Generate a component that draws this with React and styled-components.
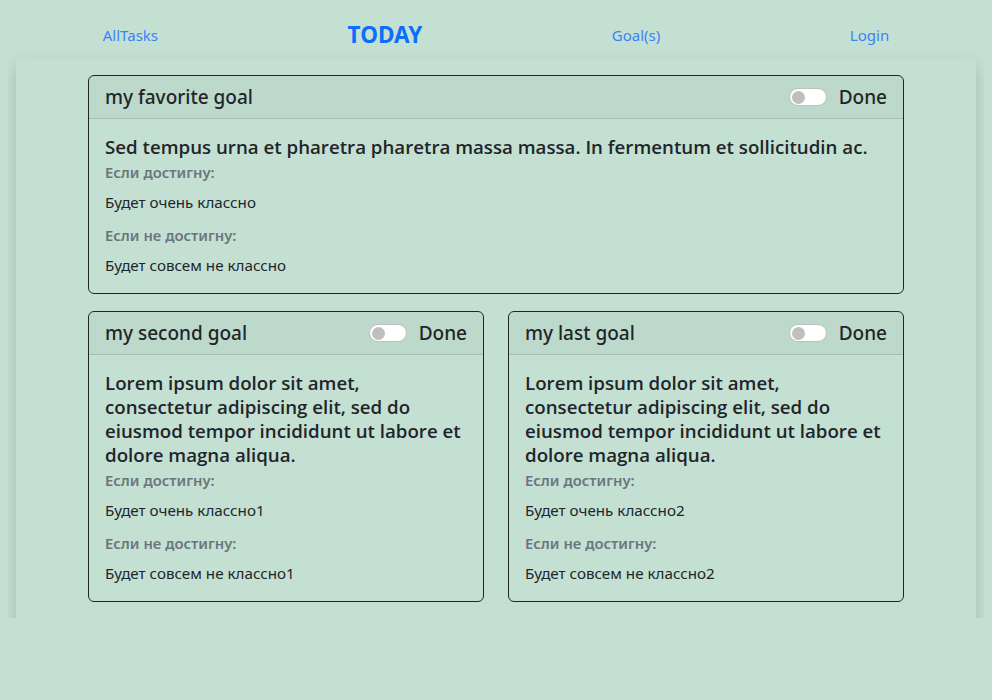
import React from "react";
import styled, { createGlobalStyle } from "styled-components";

// STYLE
const Global = createGlobalStyle`
  html, body {
    background: #c4e0d3;
  }
  body {
    margin: 8px;
    font-family: "Noto Sans", "Open Sans", sans-serif;
    color: #212529;
  }
  * { box-sizing: border-box; }
`;

const Nav = styled.nav`
  height: 51px;
  padding-top: 3px;
  display: flex;
  align-items: center;
  justify-content: space-around;
`;

const NavLink = styled.a`
  padding: 8px 16px;
  color: #3b82f6;
  font-size: 15px;
  line-height: 24px;
  text-decoration: none;
  cursor: pointer;
  ${(p) =>
    p.$active &&
    `
    color: #0d6efd;
    font-size: 22.5px;
    font-weight: 700;
  `}
`;

const Panel = styled.main`
  margin: 0 8px;
  padding: 16px 72px;
  display: flex;
  flex-direction: column;
  gap: 17px;
  box-shadow: 0 8px 16px rgba(0, 0, 0, 0.17);
`;

const Row = styled.div`
  display: grid;
  grid-template-columns: 1fr 1fr;
  gap: 24px;
  align-items: start;
`;

const Card = styled.section`
  border: 1px solid #212529;
  border-radius: 6px;
  overflow: hidden;
`;

const CardHeader = styled.header`
  display: flex;
  align-items: center;
  justify-content: space-between;
  padding: 9px 16px 9px;
  background: rgba(0, 0, 0, 0.03);
  border-bottom: 1px solid rgba(0, 0, 0, 0.13);
  font-size: 19px;
  font-weight: 500;
  line-height: 24px;
`;

const Check = styled.label`
  display: flex;
  align-items: center;
  gap: 12px;
  cursor: pointer;
`;

const Switch = styled.span`
  width: 38px;
  height: 18px;
  border-radius: 9px;
  border: 1px solid rgba(0, 0, 0, 0.25);
  background: #fff;
  display: flex;
  align-items: center;
  padding-left: 2px;
  &::before {
    content: "";
    width: 13px;
    height: 13px;
    border-radius: 50%;
    background: #bfbfbf;
  }
`;

const CardBody = styled.div`
  padding: 16px;
`;

const Title = styled.h5`
  margin: 0 0 8px;
  font-family: "Open Sans", "Noto Sans", sans-serif;
  font-size: 18.7px;
  font-weight: 600;
  line-height: 24px;
`;

const Subtitle = styled.h6`
  margin: -4px 0 8px;
  font-size: 14.8px;
  font-weight: 600;
  line-height: 19px;
  color: #6c757d;
`;

const Text = styled.p`
  margin: 0 0 16px;
  font-size: 15.2px;
  line-height: 24px;
  &:last-child {
    margin-bottom: 0;
  }
`;

const goals = [
  {
    name: "my favorite goal",
    text: "Sed tempus urna et pharetra pharetra massa massa. In fermentum et sollicitudin ac.",
    win: "Будет очень классно",
    lose: "Будет совсем не классно",
  },
  {
    name: "my second goal",
    text: "Lorem ipsum dolor sit amet, consectetur adipiscing elit, sed do eiusmod tempor incididunt ut labore et dolore magna aliqua.",
    win: "Будет очень классно1",
    lose: "Будет совсем не классно1",
  },
  {
    name: "my last goal",
    text: "Lorem ipsum dolor sit amet, consectetur adipiscing elit, sed do eiusmod tempor incididunt ut labore et dolore magna aliqua.",
    win: "Будет очень классно2",
    lose: "Будет совсем не классно2",
  },
];

const Goal = ({ goal }) => (
  <Card>
    <CardHeader>
      <span>{goal.name}</span>
      <Check>
        <Switch />
        Done
      </Check>
    </CardHeader>
    <CardBody>
      <Title>{goal.text}</Title>
      <Subtitle>Если достигну:</Subtitle>
      <Text>{goal.win}</Text>
      <Subtitle>Если не достигну:</Subtitle>
      <Text>{goal.lose}</Text>
    </CardBody>
  </Card>
);

const App = () => {
  return (
    <>
      <Global />
      <Nav>
        <NavLink>AllTasks</NavLink>
        <NavLink $active>TODAY</NavLink>
        <NavLink>Goal(s)</NavLink>
        <NavLink>Login</NavLink>
      </Nav>
      <Panel>
        <Goal goal={goals[0]} />
        <Row>
          <Goal goal={goals[1]} />
          <Goal goal={goals[2]} />
        </Row>
      </Panel>
    </>
  );
};

export default App;
